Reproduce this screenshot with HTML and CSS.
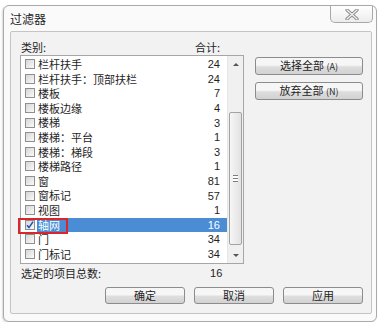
FILE: index.html
```html
<!DOCTYPE html>
<html lang="zh-CN">
<head>
    <meta charset="UTF-8">
    <title>过滤器</title>
    <link rel="stylesheet" href="styles.css">
</head>
<body>
    <div class="window">
        <div class="title-bar">
            <span class="title">过滤器</span>
            <button class="close-btn">
                <svg width="14" height="11" viewBox="0 0 14 11">
                    <path d="M2 1 L12 10 M12 1 L2 10" stroke="#8a8a8a" stroke-width="3.2" stroke-linecap="round"/>
                    <path d="M2 1 L12 10 M12 1 L2 10" stroke="#f4f4f4" stroke-width="1.2" stroke-linecap="round"/>
                </svg>
            </button>
        </div>
        <div class="panel">
            <div class="main">
                <div class="left-col">
                    <div class="list-header">
                        <span>类别:</span>
                        <span>合计:</span>
                    </div>
                    <div class="list-box">
                        <div class="rows" id="rows"></div>
                        <div class="scrollbar">
                            <div class="arrow up"></div>
                            <div class="track">
                                <div class="thumb"><span class="grip"></span></div>
                            </div>
                            <div class="arrow down"></div>
                        </div>
                    </div>
                    <div class="total-row">
                        <span>选定的项目总数:</span>
                        <span class="total-num">16</span>
                    </div>
                </div>
                <div class="right-col">
                    <button class="btn side-btn">选择全部 <span class="key">(A)</span></button>
                    <button class="btn side-btn">放弃全部 <span class="key">(N)</span></button>
                </div>
            </div>
            <div class="bottom-bar">
                <button class="btn">确定</button>
                <button class="btn">取消</button>
                <button class="btn">应用</button>
            </div>
        </div>
    </div>
    <script>
        const items = [
            ['栏杆扶手', 24],
            ['栏杆扶手：顶部扶栏', 24],
            ['楼板', 7],
            ['楼板边缘', 4],
            ['楼梯', 3],
            ['楼梯：平台', 1],
            ['楼梯：梯段', 3],
            ['楼梯路径', 1],
            ['窗', 81],
            ['窗标记', 57],
            ['视图', 1],
            ['轴网', 16, true],
            ['门', 34],
            ['门标记', 34]
        ];

        const rows = document.getElementById('rows');
        items.forEach(([name, count, checked]) => {
            const row = document.createElement('div');
            row.className = checked ? 'row selected' : 'row';
            row.innerHTML =
                `<span class="check">${checked ? '<svg width="8" height="8" viewBox="0 0 8 8"><path d="M1 4.2 L3 6.6 L7 0.8" fill="none" stroke="#2a4fb8" stroke-width="1.5"/></svg>' : ''}</span>` +
                `<span class="name">${name}</span>` +
                `<span class="count">${count}</span>` +
                (checked ? '<span class="mark"></span>' : '');
            rows.appendChild(row);
        });
    </script>
</body>
</html>
```

FILE: styles.css
```css
body {
    margin: 0;
    background: #fff;
    font-family: "Noto Sans CJK SC", "Liberation Sans", sans-serif;
    font-size: 11px;
    color: #1e1e1e;
}

.window {
    box-sizing: border-box;
    width: 374px;
    height: 317px;
    margin: 5px 0 0 3px;
    border: 1px solid #a9a9a9;
    border-radius: 6px;
    background: #fafafa;
    box-shadow: -1px 1px 2px rgba(0, 0, 0, 0.15);
}

.title-bar {
    height: 25px;
    display: flex;
    justify-content: space-between;
    align-items: flex-start;
}

.title {
    font-size: 12px;
    line-height: 14px;
    margin: 6px 0 0 6px;
}

.close-btn {
    width: 43px;
    height: 17px;
    margin-right: 3px;
    padding: 0;
    border: 1px solid #a8a8a8;
    border-top: none;
    border-radius: 0 0 5px 5px;
    background: linear-gradient(#ffffff, #ececec);
    display: flex;
    justify-content: center;
    align-items: center;
}

.panel {
    box-sizing: border-box;
    width: 362px;
    height: 283px;
    margin-left: 6px;
    border: 1px solid #c4c4c4;
    border-radius: 2px;
    background: #f2f2f2;
    padding: 8px 8px 0 9px;
}

.main {
    display: flex;
    gap: 11px;
}

.left-col {
    width: 224px;
}

.list-header {
    height: 15px;
    line-height: 14px;
    display: flex;
    justify-content: space-between;
    padding: 0 24px 0 1px;
}

.list-box {
    box-sizing: border-box;
    height: 209px;
    border: 1px solid #a6a6a6;
    background: #fff;
    display: flex;
}

.rows {
    flex: 1;
    padding-top: 1px;
}

.row {
    position: relative;
    height: 14.6px;
    display: flex;
    align-items: center;
}

.check {
    box-sizing: border-box;
    width: 10px;
    height: 10px;
    margin: 0 2px 0 4px;
    border: 1px solid #8e8f8f;
    background: linear-gradient(135deg, #d6d6d6, #fafafa);
    display: flex;
    justify-content: center;
    align-items: center;
}

.name {
    flex: 1;
    height: 14.6px;
    line-height: 14.6px;
    padding-left: 1px;
}

.count {
    font-family: "Liberation Sans", sans-serif;
    font-size: 11px;
    padding-right: 7px;
}

.selected .name,
.selected .count {
    height: 14.6px;
    line-height: 14.6px;
    background: #4a8dd5;
    color: #fff;
}

.mark {
    position: absolute;
    left: -3px;
    top: 0;
    width: 46px;
    height: 12px;
    border: 2px solid #d8262b;
}

.scrollbar {
    width: 15px;
    background: #f0f0f0;
    border-left: 1px solid #e6e6e6;
    display: flex;
    flex-direction: column;
}

.arrow {
    height: 16px;
    display: flex;
    justify-content: center;
    align-items: center;
}

.arrow::after {
    content: "";
    border-left: 3px solid transparent;
    border-right: 3px solid transparent;
}

.arrow.up::after {
    border-bottom: 3px solid #555;
}

.arrow.down::after {
    border-top: 3px solid #555;
}

.track {
    flex: 1;
    display: flex;
    flex-direction: column;
    justify-content: flex-end;
    padding: 0 1px 2px;
}

.thumb {
    box-sizing: border-box;
    height: 133px;
    border: 1px solid #a3a3a3;
    border-radius: 2px;
    background: linear-gradient(to right, #f6f6f6, #e2e2e2);
    display: flex;
    justify-content: center;
    align-items: center;
}

.grip {
    width: 5px;
    height: 5px;
    border-top: 1px solid #7d7d7d;
    border-bottom: 1px solid #7d7d7d;
    background: linear-gradient(#fff 2px, #7d7d7d 2px, #7d7d7d 3px, #fff 3px);
}

.total-row {
    margin-top: 2px;
    height: 14px;
    line-height: 14px;
    display: flex;
    padding-left: 1px;
}

.total-num {
    font-family: "Liberation Sans", sans-serif;
    margin-left: 109px;
}

.right-col {
    flex: 1;
    display: flex;
    flex-direction: column;
    gap: 7px;
    padding-top: 17px;
}

.btn {
    box-sizing: border-box;
    height: 18px;
    padding: 0;
    border: 1px solid #8c8c8c;
    border-radius: 3px;
    background: linear-gradient(#f6f6f6 45%, #dedede 55%, #d2d2d2);
    font-family: "Noto Sans CJK SC", "Liberation Sans", sans-serif;
    font-size: 11px;
    line-height: 15px;
    color: #1e1e1e;
}

.side-btn {
    width: 108px;
}

.key {
    font-size: 9px;
}

.bottom-bar {
    display: flex;
    justify-content: flex-end;
    gap: 9px;
    margin-top: 7px;
}

.bottom-bar .btn {
    width: 80px;
    height: 17px;
}
```
